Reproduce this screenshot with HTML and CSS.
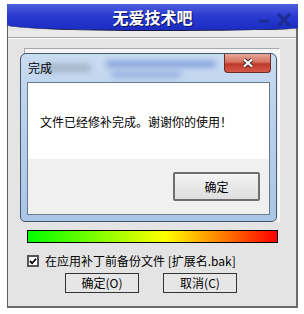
FILE: index.html
```html
<!DOCTYPE html>
<html lang="zh-CN">

<head>
    <meta charset="UTF-8">
    <title>无爱技术吧</title>
    <link rel="stylesheet" href="styles.css">
</head>

<body>
    <div class="okno">
        <div class="titulek">
            <span class="nazev">无爱技术吧</span>
            <span class="ovladani">
                <svg width="12" height="14" viewBox="0 0 12 14">
                    <path d="M1 8 H11" stroke="#1d2c8e" stroke-width="3" />
                </svg>
                <svg width="16" height="14" viewBox="0 0 16 14">
                    <path d="M2 1 L14 13 M14 1 L2 13" stroke="#1d2c8e" stroke-width="3" />
                </svg>
            </span>
        </div>
        <div class="oddel"></div>
        <div class="ramec">
            <div class="dialog">
                <span class="rozmaz r1"></span>
                <span class="rozmaz r2"></span>
                <span class="rozmaz r3"></span>
                <div class="dlg-titulek">完成</div>
                <div class="zavrit">
                    <svg width="14" height="10" viewBox="0 0 14 10">
                        <path d="M3 1.5 L11 8.5 M11 1.5 L3 8.5" stroke="#3a2a2a" stroke-width="4" />
                        <path d="M3 1.5 L11 8.5 M11 1.5 L3 8.5" stroke="#fff" stroke-width="2.2" />
                    </svg>
                </div>
                <div class="dlg-obsah">
                    <div class="zprava">文件已经修补完成。谢谢你的使用！</div>
                    <div class="dlg-pata">
                        <button class="tlac-win7">确定</button>
                    </div>
                </div>
            </div>
        </div>
        <div class="pruh"></div>
        <div class="zaloha">
            <span class="box">
                <svg width="9" height="8" viewBox="0 0 9 8">
                    <path d="M1 4 L3.5 6.5 L8 1.5" stroke="#000" stroke-width="2" fill="none" />
                </svg>
            </span>
            <span>在应用补丁前备份文件 [扩展名.bak]</span>
        </div>
        <div class="tlacitka">
            <button class="tlac">确定(O)</button>
            <button class="tlac">取消(C)</button>
        </div>
    </div>
</body>

</html>
```

FILE: styles.css
```css
body {
    margin: 0;
    background-color: white;
    font-family: "Noto Sans CJK SC", sans-serif;
}

.okno {
    margin: 4px 0px 0px 7px;
    width: 291px;
    height: 304px;
    box-sizing: border-box;
    border-left: 1px solid #5f5f5f;
    border-right: 2px solid #6a6a6a;
    border-bottom: 2px solid #6a6a6a;
    background-color: #e4e4e4;
    display: flex;
    flex-direction: column;
}

.titulek {
    height: 27px;
    box-sizing: border-box;
    margin-left: -1px;
    margin-right: -2px;
    background: linear-gradient(#4f5fdc, #2a3bd0 45%, #1b2cc4);
    border-bottom: 1px solid #1a1a40;
    border-bottom-left-radius: 50% 6px;
    border-bottom-right-radius: 50% 3px;
    position: relative;
    display: flex;
    justify-content: center;
    align-items: flex-start;
}

.nazev {
    margin-top: 4px;
    color: white;
    font-size: 16px;
    font-weight: bold;
    line-height: 18px;
    text-shadow: 1px 1px 0px #101050;
}

/* tlacitka v rohu titulku */
.ovladani {
    position: absolute;
    right: 6px;
    top: 9px;
    display: flex;
    gap: 6px;
}

.oddel {
    height: 6px;
    background-color: #ebebeb;
    border-bottom: 1px solid #a0a0a0;
    box-shadow: 0px 1px 0px white;
    margin-top: 0px;
}

.ramec {
    position: relative;
    margin: 10px 0px 0px 16px;
    width: 256px;
    height: 174px;
    box-sizing: border-box;
    border: 1px solid #a8a8a8;
    border-right-color: white;
    border-bottom-color: white;
    background-color: #f4f4f4;
}

.dialog {
    position: absolute;
    left: -5px;
    top: 4px;
    width: 257px;
    height: 169px;
    box-sizing: border-box;
    border: 1px solid #46566a;
    border-radius: 6px 6px 5px 5px;
    background: linear-gradient(#c9dcf1, #b9d1ec 40%, #aac6e6);
    padding: 0px 6px 6px 6px;
    display: flex;
    flex-direction: column;
    overflow: hidden;
}

/* rozmazane pozadi za sklem */
.rozmaz {
    position: absolute;
    filter: blur(3px);
    border-radius: 4px;
}

.r1 {
    left: 85px;
    top: 7px;
    width: 110px;
    height: 6px;
    background-color: #7e98d8;
}

.r2 {
    left: 90px;
    top: 18px;
    width: 70px;
    height: 5px;
    background-color: #8aa2dc;
}

.r3 {
    left: 20px;
    top: 10px;
    width: 50px;
    height: 8px;
    background-color: #a4b2c4;
}

.dlg-titulek {
    position: relative;
    height: 28px;
    padding-left: 1px;
    font-size: 12px;
    line-height: 28px;
    color: black;
}

.zavrit {
    position: absolute;
    right: 5px;
    top: 0px;
    width: 47px;
    height: 19px;
    box-sizing: border-box;
    border: 1px solid #6e2e26;
    border-top: none;
    border-radius: 0px 0px 4px 4px;
    background: linear-gradient(#e8a89a, #d6705e 45%, #c0382a 55%, #d25a48);
    display: flex;
    justify-content: center;
    align-items: center;
}

.dlg-obsah {
    position: relative;
    flex: 1;
    border: 1px solid #6a7a8c;
    background-color: white;
    display: flex;
    flex-direction: column;
}

.zprava {
    height: 76px;
    padding-left: 12px;
    font-size: 12px;
    display: flex;
    align-items: center;
}

.dlg-pata {
    flex: 1;
    background-color: #f0f0f0;
    display: flex;
    justify-content: flex-end;
    align-items: flex-start;
    padding: 13px 9px 0px 0px;
}

.tlac-win7 {
    width: 87px;
    height: 29px;
    border: 2px solid #6f6f6f;
    border-radius: 2px;
    background: linear-gradient(#f4f4f4, #e8e8e8 50%, #dedede);
    font-family: "Noto Sans CJK SC", sans-serif;
    font-size: 12px;
    padding: 0px;
}

.pruh {
    margin: 8px 0px 0px 19px;
    width: 251px;
    height: 13px;
    box-sizing: border-box;
    border: 1px solid black;
    background: linear-gradient(to right, #00ff00, #ffff00 55%, #ff0000);
}

.zaloha {
    margin: 12px 0px 0px 19px;
    height: 12px;
    display: flex;
    align-items: center;
    gap: 6px;
    font-size: 12px;
    line-height: 12px;
}

.box {
    width: 12px;
    height: 12px;
    box-sizing: border-box;
    border: 2px solid #555;
    background-color: white;
    display: flex;
    justify-content: center;
    align-items: center;
}

.tlacitka {
    margin-top: 6px;
    display: flex;
    gap: 24px;
    padding-left: 57px;
}

.tlac {
    width: 74px;
    height: 20px;
    border: 1px solid #333;
    background-color: #e6e6e6;
    font-family: "Noto Sans CJK SC", sans-serif;
    font-size: 12px;
    line-height: 16px;
    padding: 0px;
}
```
